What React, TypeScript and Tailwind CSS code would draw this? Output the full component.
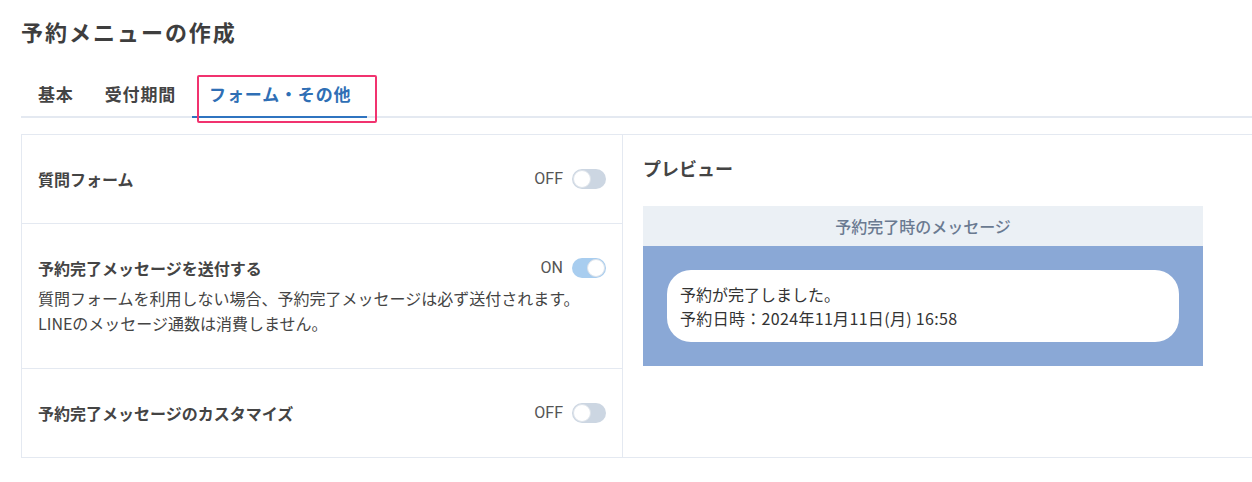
import { useState } from 'react'

const font = "font-['Noto_Sans_CJK_JP','Noto_Sans',sans-serif]"

const tabs = [
  { label: '基本', cls: 'pl-[17px] pr-[31px] pb-[9px]' },
  { label: '受付期間', cls: 'pr-[16px] pb-[9px]' },
  { label: 'フォーム・その他', cls: '-mb-[2px] w-[175px] border-b-2 border-[#2f74c0] pb-[7px] pl-[17px] text-[#2f6fb5]' },
]

type ToggleProps = { on: boolean; onChange: () => void }

const Toggle = ({ on, onChange }: ToggleProps) => (
  <button
    type="button"
    onClick={onChange}
    className="flex items-center gap-[9px] text-[16px] leading-[20px] text-[#555]"
  >
    <span className="font-['Roboto',sans-serif]">{on ? 'ON' : 'OFF'}</span>
    <span
      className={`flex h-[20px] w-[34px] items-center rounded-full p-[1px] ${
        on ? 'justify-end bg-[#a8cdef]' : 'justify-start bg-[#ccd6e2]'
      }`}
    >
      <span className="h-[18px] w-[18px] rounded-full border border-[#dde3ea] bg-white" />
    </span>
  </button>
)

const App = () => {
  const [settings, setSettings] = useState({ form: false, send: true, custom: false })
  const flip = (key: keyof typeof settings) => setSettings((s) => ({ ...s, [key]: !s[key] }))

  return (
    <div className={`${font} h-[482px] w-[1252px] overflow-hidden bg-white pl-[21px] text-[#444]`}>
      <h1 className="pt-[15px] text-[22px] font-bold leading-[32px] tracking-[0.09em] text-[#3e3e3e]">
        予約メニューの作成
      </h1>

      <div className="relative mt-[34px] flex border-b-2 border-[#e4e9f1] text-[17px] font-bold leading-[26px] tracking-[0.05em]">
        {tabs.map(({ label, cls }) => (
          <div key={label} className={cls}>
            {label}
          </div>
        ))}
        <div className="pointer-events-none absolute left-[176px] top-[-6px] h-[48px] w-[180px] rounded-[2px] border-2 border-[#f1336f]" />
      </div>

      <div className="mt-[16px] flex w-[1260px] border border-[#e4e9f1]">
        <div className="w-[601px] shrink-0 border-r border-[#e4e9f1]">
          <div className="flex h-[88px] items-center justify-between px-[16px]">
            <span className="text-[16px] font-bold">質問フォーム</span>
            <Toggle on={settings.form} onChange={() => flip('form')} />
          </div>
          <div className="border-t border-[#e4e9f1] px-[16px] pb-[32px] pt-[32px]">
            <div className="flex items-center justify-between leading-[24px]">
              <span className="text-[16px] font-bold">予約完了メッセージを送付する</span>
              <Toggle on={settings.send} onChange={() => flip('send')} />
            </div>
            <p className="mt-[6px] text-[16px] leading-[25px]">
              質問フォームを利用しない場合、予約完了メッセージは必ず送付されます。
              <br />
              LINEのメッセージ通数は消費しません。
            </p>
          </div>
          <div className="flex h-[89px] items-center justify-between border-t border-[#e4e9f1] px-[16px]">
            <span className="text-[16px] font-bold">予約完了メッセージのカスタマイズ</span>
            <Toggle on={settings.custom} onChange={() => flip('custom')} />
          </div>
        </div>

        <div className="flex-1 px-[20px] pt-[21px]">
          <h2 className="text-[18px] font-bold leading-[24px]">プレビュー</h2>
          <div className="mt-[26px] w-[560px]">
            <div className="flex h-[40px] items-center justify-center bg-[#ebf0f5] text-[16px] font-medium text-[#6a7a91]">
              予約完了時のメッセージ
            </div>
            <div className="bg-[#8aa8d6] p-[24px]">
              <div className="rounded-[24px] bg-white px-[13px] py-[12px] text-[16px] leading-[24px] text-[#333]">
                <p>予約が完了しました。</p>
                <p className="tracking-[0.02em]">予約日時：2024年11月11日(月) 16:58</p>
              </div>
            </div>
          </div>
        </div>
      </div>
    </div>
  )
}

export default App
